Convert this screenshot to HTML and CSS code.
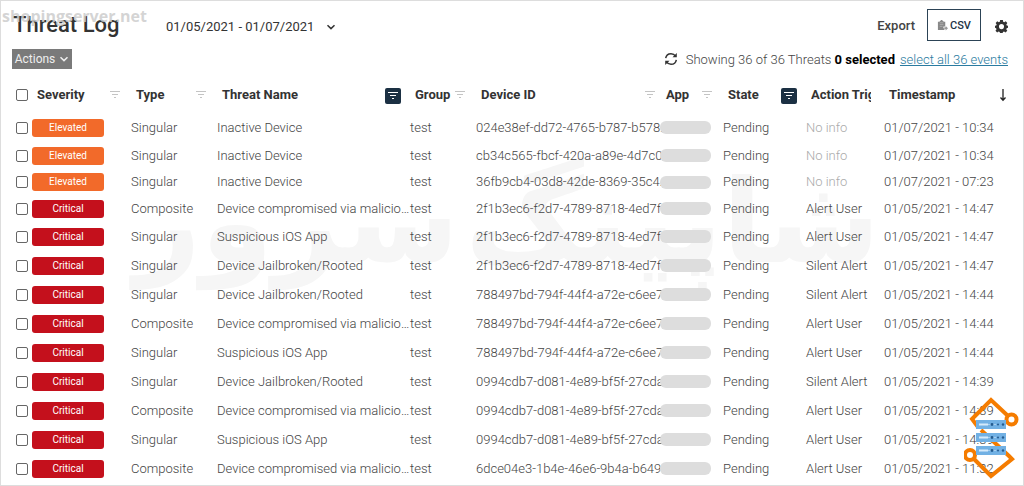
FILE: index.html
```html
<!DOCTYPE html>
<html lang="en">
<head>
<meta charset="utf-8">
<title>Threat Log</title>
<link rel="stylesheet" href="styles.css">
</head>
<body>
<svg class="sprite" aria-hidden="true">
  <symbol id="filter" viewBox="0 0 12 10"><path d="M1 1.5h10M3 4.5h6M5 7.5h2" fill="none" stroke="currentColor" stroke-width="1.2"/></symbol>
  <symbol id="chevron" viewBox="0 0 10 8"><path d="M1.5 2.2 5 5.6l3.500-3.400" fill="none" stroke="currentColor" stroke-width="1.5"/></symbol>
</svg>
<div class="watermark" lang="fa" dir="rtl"><span>شاپینگ</span><span>سرور</span></div>
<main class="page">
  <header class="topbar">
    <h1 class="title">Threat Log</h1>
    <button class="range" type="button">01/05/2021 - 01/07/2021 <svg class="chev"><use href="#chevron"/></svg></button>
    <div class="tools">
      <span class="export">Export</span>
      <button class="csv" type="button">
        <svg class="clip" viewBox="0 0 12 12"><path d="M1 2h2V1h1V0h2v1h1v1h2v5H7v2h1v2H1z" fill="#888"/><path d="M3 3h4M3 5h4M3 7h3" stroke="#bbb" stroke-width=".7"/><path d="M8 8h1.500V6.500L12 9l-2.500 2.500V10H8z" fill="#999"/></svg>CSV</button>
      <button class="gear" type="button" aria-label="Settings"><svg viewBox="0 0 24 24" width="13" height="13"><path fill="#333" fill-rule="evenodd" d="M9.500 0h5l.6 3.200 2 .9L19.800 2.200l3 3.500-1.900 2.700.7 1.900 2.400.5v3.600l-2.500.7-.7 2 1.900 2.700-3.300 3.300-2.700-1.900-2 .8-.7 3h-4.600l-.7-3-2-.8L4 23.100.9 19.800l1.900-2.700-.7-2-2.100-.7v-3.600l2.300-.5.800-1.900L1.200 5.700l3-3.500 2.700 1.900 2-.9zM12 7.500a4.700 4.700 0 1 0 0 9.400 4.700 4.700 0 0 0 0-9.400z"/></svg></button>
    </div>
  </header>
  <div class="subbar">
    <button class="actions" type="button">Actions <svg class="chev"><use href="#chevron"/></svg></button>
    <p class="status">
      <svg class="refresh" viewBox="0 0 14 14"><path d="M1.700 6.200C2.200 3.200 4.500 1.700 7 1.700c2 0 3.500.8 4.500 2.400M12.300 7.800c-.5 3-2.800 4.500-5.300 4.500-2 0-3.500-.8-4.500-2.400" fill="none" stroke="#333" stroke-width="1.500"/><path d="M12.800 1v4.300H8.500zM1.200 13V8.700h4.300z" fill="#333"/></svg>
      <span>Showing 36 of 36 Threats <b>0 selected</b></span>
      <a href="#all">select all 36 events</a>
    </p>
  </div>
  <table class="log">
    <colgroup><col class="c-check"><col class="c-sev"><col class="c-type"><col class="c-name"><col class="c-group"><col class="c-device"><col class="c-app"><col class="c-state"><col class="c-action"><col class="c-time"></colgroup>
    <thead><tr>
      <th><input type="checkbox" aria-label="Select all"></th>
      <th><div class="head">Severity<svg class="filter"><use href="#filter"/></svg></div></th>
      <th><div class="head">Type<svg class="filter"><use href="#filter"/></svg></div></th>
      <th><div class="head on">Threat Name<button class="active" type="button" aria-label="Filter threat name"><svg class="filter"><use href="#filter"/></svg></button></div></th>
      <th><div class="head">Group<svg class="filter"><use href="#filter"/></svg></div></th>
      <th><div class="head wide">Device ID<svg class="filter"><use href="#filter"/></svg></div></th>
      <th><div class="head">App<svg class="filter"><use href="#filter"/></svg></div></th>
      <th><div class="head on">State<button class="active" type="button" aria-label="Filter state"><svg class="filter"><use href="#filter"/></svg></button></div></th>
      <th><div class="head clipped"><span class="cut">Action Triggered</span></div></th>
      <th><div class="head wide">Timestamp<svg class="sort" viewBox="0 0 8 14"><path d="M4 1v11M1.500 9.500 4 12.200l2.500-2.700" fill="none" stroke="#222" stroke-width="1.300"/></svg></div></th>
    </tr></thead>
    <tbody id="rows"></tbody>
  </table>
</main>
<div class="site">shopingserver.net</div>
<svg class="logo" viewBox="0 0 56 84">
  <g fill="none" stroke="#f57c00" stroke-width="4">
    <path d="M43 19 27 4 8 23l6 8M17 34l28 26 3 3-21 17L10 63"/>
    <circle cx="47.500" cy="23.500" r="5"/><circle cx="6" cy="59" r="5"/>
  </g>
  <g fill="#72b1e4"><path d="M12 24h30v9H12zM12 37h30v9H12zM12 50h30v9H12z"/></g>
  <path d="M15 28.500h9M15 41.500h9M15 54.500h9" stroke="#d5eafa" stroke-width="2"/>
  <path d="M24 28.500h8M24 41.500h8M24 54.500h8" stroke="#a7d0f0"/>
  <g fill="#245b8f"><circle cx="28" cy="28.500" r="1.400"/><circle cx="34" cy="28.500" r="1"/><circle cx="39" cy="28.500" r="1.200"/><circle cx="28" cy="41.500" r="1.400"/><circle cx="34" cy="41.500" r="1"/><circle cx="39" cy="41.500" r="1.200"/><circle cx="28" cy="54.500" r="1.400"/><circle cx="34" cy="54.500" r="1"/><circle cx="39" cy="54.500" r="1.200"/></g>
</svg>
<script src="rows.js"></script>
</body>
</html>
```
FILE: styles.css
```css
* { box-sizing: border-box; }
body { margin: 0; font-family: Roboto, "Liberation Sans", sans-serif; font-size: 13px; color: #444; background: #fff; position: relative; }
button { font: inherit; color: inherit; background: none; border: 0; padding: 0; }
.sprite { position: absolute; width: 0; height: 0; }
.page { position: relative; border: 1px solid #ddd; padding: 6px 11px 2px; }
.topbar { display: flex; align-items: center; height: 35px; }
.title { margin: 0; padding-left: 1px; font-size: 22px; font-weight: 500; line-height: 35px; color: #333; width: 154px; }
.range { display: flex; align-items: center; gap: 12px; font-size: 13px; color: #333; padding-top: 4px; }
.chev { width: 10px; height: 8px; }
.tools { margin-left: auto; display: flex; align-items: center; }
.export { font-size: 13px; font-weight: 500; margin-right: 12px; padding-top: 2px; }
.csv { display: flex; align-items: center; justify-content: center; gap: 2px; width: 54px; height: 32px; padding-top: 2px; border: 1px solid #2c4356; font-size: 11px; font-weight: 500; color: #1c3347; margin-right: 14px; }
.clip { width: 11px; height: 11px; }
.gear { display: flex; margin-right: 4px; padding-top: 3px; }
.subbar { display: flex; justify-content: space-between; align-items: center; height: 34px; }
.actions { display: flex; align-items: center; justify-content: center; gap: 4px; width: 60px; height: 20px; background: #7a7a7a; color: #eee; font-size: 12px; }
.status { display: flex; align-items: center; margin: 0 4px 0 0; font-size: 13px; font-weight: 300; }
.status b { color: #000; font-weight: 700; }
.status a { color: #2a7ba0; margin-left: 5px; }
.refresh { width: 14px; height: 14px; margin-right: 8px; }
.log { width: 100%; table-layout: fixed; border-collapse: collapse; }
.c-check { width: 2%; } .c-sev { width: 9.9%; } .c-type { width: 8.6%; } .c-name { width: 19.3%; } .c-group { width: 6.6%; }
.c-device { width: 18.5%; } .c-app { width: 6.2%; } .c-state { width: 8.3%; } .c-action { width: 7.8%; } .c-time { width: 12.8%; }
th, td { padding: 0; text-align: left; white-space: nowrap; vertical-align: middle; }
th { height: 37px; font-weight: 700; color: #333; }
td { height: 29px; font-weight: 300; color: #444; line-height: 16px; }
.mid td { height: 27px; }
.tight td { height: 26px; }
.head { display: flex; align-items: center; justify-content: space-between; padding: 0 10px 0 5px; }
.head.on { padding-right: 9px; }
.head.wide { padding-right: 5px; }
.head.clipped { padding-right: 13px; }
.cut { overflow: hidden; }
.filter { width: 12px; height: 10px; color: #c4c4c4; flex: none; }
.active { display: flex; align-items: center; justify-content: center; width: 16px; height: 16px; margin-top: 3px; background: #1b3043; border-radius: 2px; }
.active .filter { color: #fff; }
.sort { width: 8px; height: 14px; }
input { appearance: none; display: block; width: 12px; height: 12px; margin: 0 0 0 4px; border: 1px solid #666; border-radius: 2px; background: #fff; }
.badge { display: block; width: 72px; height: 18px; border-radius: 3px; color: #fff; font-size: 10px; font-weight: 400; line-height: 18px; text-align: center; }
.elevated { background: #f26a2a; }
.critical { background: #c4101c; }
.pill { display: block; position: relative; width: 51px; height: 13px; margin-left: -1px; border-radius: 6px; background: #ddd; }
.none { color: #aaa; }
.site { position: absolute; left: 2px; top: 5px; font: 700 16px/22px "Open Sans", sans-serif; color: rgba(205, 205, 205, .85); }
.watermark { position: absolute; left: 134px; right: 144px; top: 132px; display: flex; justify-content: space-between; font: 700 116px/180px "DejaVu Sans", sans-serif; color: #f6f6f6; pointer-events: none; }
.logo { position: absolute; right: 4px; top: 396px; width: 56px; height: 84px; }
```
FILE: rows.js
```js
const M = "Device compromised via malicio…";
const S = "Suspicious iOS App";
const J = "Device Jailbroken/Rooted";
const I = "Inactive Device";
const rows = [
  ["Elevated", "Singular", I, "024e38ef-dd72-4765-b787-b578…", "", "01/07/2021 - 10:34"],
  ["Elevated", "Singular", I, "cb34c565-fbcf-420a-a89e-4d7c0…", "", "01/07/2021 - 10:34", "mid"],
  ["Elevated", "Singular", I, "36fb9cb4-03d8-42de-8369-35c4…", "", "01/07/2021 - 07:23", "tight"],
  ["Critical", "Composite", M, "2f1b3ec6-f2d7-4789-8718-4ed7f…", "Alert User", "01/05/2021 - 14:47", "mid"],
  ["Critical", "Singular", S, "2f1b3ec6-f2d7-4789-8718-4ed7f…", "Alert User", "01/05/2021 - 14:47"],
  ["Critical", "Singular", J, "2f1b3ec6-f2d7-4789-8718-4ed7f…", "Silent Alert", "01/05/2021 - 14:47"],
  ["Critical", "Singular", J, "788497bd-794f-44f4-a72e-c6ee7…", "Silent Alert", "01/05/2021 - 14:44"],
  ["Critical", "Composite", M, "788497bd-794f-44f4-a72e-c6ee7…", "Alert User", "01/05/2021 - 14:44"],
  ["Critical", "Singular", S, "788497bd-794f-44f4-a72e-c6ee7…", "Alert User", "01/05/2021 - 14:44"],
  ["Critical", "Singular", J, "0994cdb7-d081-4e89-bf5f-27cda…", "Silent Alert", "01/05/2021 - 14:39"],
  ["Critical", "Composite", M, "0994cdb7-d081-4e89-bf5f-27cda…", "Alert User", "01/05/2021 - 14:39"],
  ["Critical", "Singular", S, "0994cdb7-d081-4e89-bf5f-27cda…", "Alert User", "01/05/2021 - 14:39"],
  ["Critical", "Composite", M, "6dce04e3-1b4e-46e6-9b4a-b649…", "Alert User", "01/05/2021 - 11:32"]
];
document.getElementById("rows").innerHTML = rows.map(([sev, type, name, id, action, time, size]) => `
  <tr class="${size || ""}">
    <td><input type="checkbox" aria-label="Select ${name}"></td>
    <td><span class="badge ${sev.toLowerCase()}">${sev}</span></td>
    <td>${type}</td><td>${name}</td><td>test</td><td>${id}</td>
    <td><span class="pill"></span></td><td>Pending</td>
    <td>${action || '<span class="none">No info</span>'}</td><td>${time}</td>
  </tr>`).join("");
```
